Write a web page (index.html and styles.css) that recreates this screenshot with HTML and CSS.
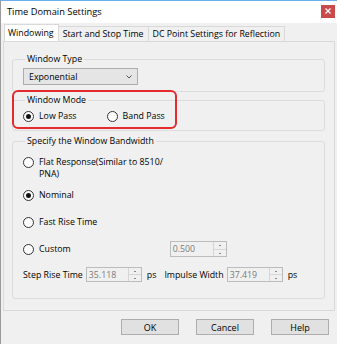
FILE: index.html
```html
<html lang="en">
<head>
    <meta charset="UTF-8">
    <title>Time Domain Settings</title>
    <link rel="stylesheet" href="styles.css">
</head>
<body>
    <!-- Dialog Window -->
    <div class="dialog">
        <div class="title-bar">
            <span class="title-text">Time Domain Settings</span>
            <span class="close-btn">
                <svg width="6" height="6" viewBox="0 0 6 6"><path d="M0.5 0.5L5.5 5.5M5.5 0.5L0.5 5.5" stroke="#fff" stroke-width="1.2"/></svg>
            </span>
        </div>
        <!-- Tabs -->
        <div class="tab-row">
            <div class="tab tab-active">Windowing</div>
            <div class="tab">Start and Stop Time</div>
            <div class="tab">DC Point Settings for Reflection</div>
        </div>
        <!-- Tab Page -->
        <div class="tab-page">
            <fieldset class="group group-type">
                <legend>Window Type</legend>
                <div class="select-box">
                    <span>Exponential</span>
                    <svg width="6" height="4" viewBox="0 0 6 4"><path d="M0.5 0.5L3 3L5.5 0.5" fill="none" stroke="#555" stroke-width="1"/></svg>
                </div>
            </fieldset>
            <fieldset class="group group-mode">
                <legend>Window Mode</legend>
                <div class="radio-line">
                    <label class="radio"><span class="radio-dot checked"></span>Low Pass</label>
                    <label class="radio"><span class="radio-dot"></span>Band Pass</label>
                </div>
            </fieldset>
            <fieldset class="group group-bandwidth">
                <legend>Specify the Window Bandwidth</legend>
                <label class="radio radio-wrap row-flat"><span class="radio-dot"></span><span>Flat Response(Similar to 8510/<br>PNA)</span></label>
                <label class="radio row-nominal"><span class="radio-dot checked"></span>Nominal</label>
                <label class="radio row-fast"><span class="radio-dot"></span>Fast Rise Time</label>
                <div class="custom-row">
                    <label class="radio"><span class="radio-dot"></span>Custom</label>
                    <div class="spin spin-custom"><span>0.500</span><span class="spin-btns"><i></i><i></i></span></div>
                </div>
                <div class="rise-row">
                    <span>Step Rise Time</span>
                    <div class="spin"><span>35.118</span><span class="spin-btns"><i></i><i></i></span></div>
                    <span class="unit">ps</span>
                    <span class="impulse-label">Impulse Width</span>
                    <div class="spin"><span>37.419</span><span class="spin-btns"><i></i><i></i></span></div>
                    <span class="unit">ps</span>
                </div>
            </fieldset>
            <!-- Highlight annotation -->
            <div class="highlight"></div>
        </div>
        <!-- Buttons -->
        <div class="button-row">
            <button class="dlg-btn">OK</button>
            <button class="dlg-btn">Cancel</button>
            <button class="dlg-btn">Help</button>
        </div>
    </div>
</body>
</html>
```

FILE: styles.css
```css
/* Global Styling */
body {
    margin: 0;
    font-family: "Open Sans", "Liberation Sans", sans-serif;
    font-size: 8.8px;
    color: #000;
}
/* Dialog Window */
.dialog {
    width: 337px;
    height: 344px;
    box-sizing: border-box;
    background-color: #f0f0f0;
    border-top: 1px solid #6aaeea;
    border-left: 1px solid #9a9a9a;
}
.title-bar {
    height: 22px;
    background-color: #fff;
    display: flex;
    align-items: center;
    justify-content: space-between;
    padding: 0 2px 0 6px;
}
.title-text {
    font-size: 9.3px;
    margin-top: -2px;
}
.close-btn {
    width: 14px;
    height: 13px;
    background-color: #c94a4a;
    display: flex;
    align-items: center;
    justify-content: center;
    margin-top: -2px;
}
/* Tabs */
.tab-row {
    display: flex;
    align-items: flex-end;
    height: 18px;
    padding-left: 3px;
}
.tab {
    height: 15px;
    line-height: 15px;
    padding: 0 4px;
    border: 1px solid #d9d9d9;
    border-bottom: none;
    border-left: none;
    background-color: #f0f0f0;
    box-sizing: border-box;
}
.tab-active {
    height: 18px;
    line-height: 17px;
    padding: 0 4px 0 3px;
    background-color: #fff;
    border-left: 1px solid #d9d9d9;
    position: relative;
    top: 1px;
}
/* Tab Page */
.tab-page {
    position: relative;
    margin-left: 2px;
    width: 332px;
    height: 270px;
    box-sizing: border-box;
    border: 1px solid #d9d9d9;
    padding: 0 9px 0 8px;
}
.group {
    margin: 0;
    border: 1px solid #dcdcdc;
    border-radius: 3px;
    padding: 0 8px 0 10px;
    min-width: 0;
}
.group legend {
    padding: 0 2px;
    margin-left: 2px;
    line-height: 12px;
}
.group-type {
    margin-top: 11px;
    padding-top: 3px;
    padding-bottom: 6px;
}
.group-mode {
    margin-top: 2px;
    padding-top: 4px;
    padding-bottom: 8px;
}
.group-bandwidth {
    margin-top: 4px;
    padding-top: 9px;
    padding-bottom: 16px;
}
/* Select */
.select-box {
    width: 115px;
    height: 17px;
    box-sizing: border-box;
    border: 1px solid #adadad;
    background-color: #e5e5e5;
    display: flex;
    align-items: center;
    justify-content: space-between;
    padding: 0 5px 0 5px;
}
/* Radios */
.radio-line {
    display: flex;
    gap: 30px;
}
.radio {
    display: flex;
    align-items: center;
    height: 12px;
    line-height: 12px;
}
.radio-wrap {
    align-items: flex-start;
    height: auto;
}
.radio-wrap .radio-dot {
    margin-top: 1px;
}
.radio-dot {
    width: 9px;
    height: 9px;
    border: 1px solid #333;
    border-radius: 50%;
    background-color: #fff;
    margin-right: 5px;
    flex-shrink: 0;
    display: flex;
    align-items: center;
    justify-content: center;
}
.radio-dot.checked::after {
    content: "";
    width: 5px;
    height: 5px;
    border-radius: 50%;
    background-color: #111;
}
.row-nominal {
    margin-top: 9px;
}
.row-fast {
    margin-top: 15px;
}
/* Custom & Rise rows */
.custom-row {
    display: flex;
    align-items: center;
    margin-top: 13px;
    height: 16px;
}
.spin-custom {
    margin-left: 99px;
}
.rise-row {
    display: flex;
    align-items: center;
    margin-top: 10px;
    height: 15px;
}
.spin {
    width: 57px;
    height: 16px;
    box-sizing: border-box;
    border: 1px solid #bcbcbc;
    background-color: #f0f0f0;
    color: #7a7a7a;
    display: flex;
    align-items: center;
    justify-content: space-between;
    padding-left: 2px;
}
.rise-row .spin {
    width: 56px;
    height: 15px;
    margin-left: 3px;
}
.spin-btns {
    width: 12px;
    height: 100%;
    border-left: 1px solid #d6d6d6;
    display: flex;
    flex-direction: column;
}
.spin-btns i {
    flex: 1;
    position: relative;
}
.spin-btns i:first-child {
    border-bottom: 1px solid #d6d6d6;
}
.spin-btns i::after {
    content: "";
    position: absolute;
    left: 5px;
    top: 3px;
    width: 2px;
    height: 1px;
    background-color: #888;
}
.unit {
    margin-left: 5px;
}
.impulse-label {
    margin-left: 8px;
}
/* Highlight annotation */
.highlight {
    position: absolute;
    left: 8px;
    top: 48px;
    width: 165px;
    height: 39px;
    box-sizing: border-box;
    border: 2px solid #e52a2f;
    border-radius: 6px;
}
/* Buttons */
.button-row {
    display: flex;
    justify-content: flex-end;
    gap: 17px;
    padding: 8px 8px 0 0;
}
.dlg-btn {
    width: 58px;
    height: 16px;
    border: 1px solid #adadad;
    background-color: #e1e1e1;
    font-family: inherit;
    font-size: 9px;
    padding: 0;
    color: #000;
}
```
